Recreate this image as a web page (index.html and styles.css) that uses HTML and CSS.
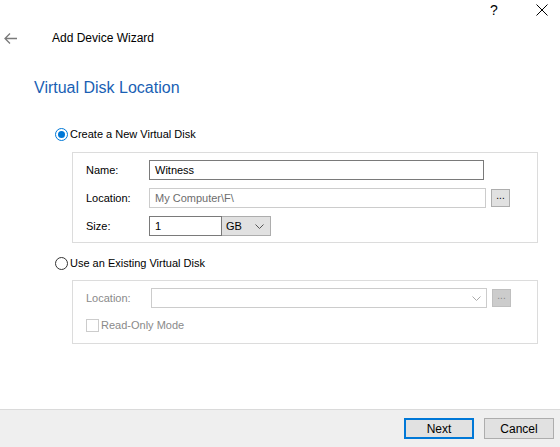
FILE: index.html
```html
<html><head>
<meta charset="utf-8">
<link rel="stylesheet" href="styles.css">
<title>Add Device Wizard</title>
</head><body>
<div class="window">
  <div class="titlebar">
    <span class="tb-btn help">?</span>
    <span class="tb-btn close">
      <svg width="12" height="12" viewBox="0 0 12 12"><path d="M0.5 0.5L11.5 11.5M11.5 0.5L0.5 11.5" stroke="#000" stroke-width="1" fill="none"/></svg>
    </span>
  </div>
  <div class="header">
    <span class="back">
      <svg width="13" height="11" viewBox="0 0 13 11"><path d="M6 0.5L1 5.5L6 10.5M1 5.5H13" stroke="#7a7a7a" stroke-width="1.3" fill="none"/></svg>
    </span>
    <span class="wizard-title">Add Device Wizard</span>
  </div>

  <div class="main">
    <div class="page-title">Virtual Disk Location</div>

    <label class="option">
      <span class="radio checked"></span>
      <span>Create a New Virtual Disk</span>
    </label>
    <div class="group">
      <div class="row">
        <span class="lbl">Name:</span>
        <div class="field name-field">Witness</div>
      </div>
      <div class="row">
        <span class="lbl">Location:</span>
        <div class="field readonly loc-field">My Computer\F\</div>
        <span class="browse">...</span>
      </div>
      <div class="row">
        <span class="lbl">Size:</span>
        <div class="field size-field">1</div>
        <div class="combo">GB
          <svg width="9" height="5" viewBox="0 0 9 5"><path d="M0.5 0.5L4.5 4.5L8.5 0.5" stroke="#555" fill="none"/></svg>
        </div>
      </div>
    </div>

    <label class="option second">
      <span class="radio"></span>
      <span>Use an Existing Virtual Disk</span>
    </label>
    <div class="group disabled">
      <div class="row">
        <span class="lbl">Location:</span>
        <div class="field dropdown">
          <svg width="9" height="5" viewBox="0 0 9 5"><path d="M0.5 0.5L4.5 4.5L8.5 0.5" stroke="#aaa" fill="none"/></svg>
        </div>
        <span class="browse">...</span>
      </div>
      <div class="row check-row">
        <span class="checkbox"></span>
        <span>Read-Only Mode</span>
      </div>
    </div>
  </div>

  <div class="footer">
    <button class="btn default">Next</button>
    <button class="btn">Cancel</button>
  </div>
</div>
</body></html>
```

FILE: styles.css
```css
body {margin: 0; padding: 0; font-family: "Liberation Sans", Arial, sans-serif; font-size: 11px; color: #000; background: #fff;}
.window {width: 560px; height: 447px; display: flex; flex-direction: column; overflow: hidden;}

.titlebar {height: 20px; display: flex; justify-content: flex-end; align-items: center;}
.tb-btn {display: flex; align-items: center; justify-content: center; height: 20px;}
.help {font-size: 14px; width: 12px; margin-right: 36px;}
.close {width: 12px; margin-right: 12px;}

.header {height: 34px; display: flex; align-items: center; margin-top: 1px;}
.back {width: 13px; margin-left: 4px; display: flex;}
.wizard-title {margin-left: 35px; font-size: 12px;}

.main {flex: 1; padding-left: 34px;}
.page-title {color: #1a5fb4; font-size: 16px; margin-top: 23px; height: 20px; line-height: 20px;}

.option {display: flex; align-items: center; margin-left: 21px; margin-top: 29px; height: 14px; gap: 2px;}
.option.second {margin-top: 13px;}
.radio {width: 11px; height: 11px; border: 1px solid #333; border-radius: 50%; background: #fff; position: relative; display: inline-block;}
.radio.checked {border-color: #0078d7;}
.radio.checked::after {content: ""; position: absolute; left: 2px; top: 2px; width: 7px; height: 7px; border-radius: 50%; background: #0078d7;}

.group {margin-left: 38px; width: 451px; border: 1px solid #dcdcdc; margin-top: 11px; padding: 7px 0 6px 13px; display: flex; flex-direction: column; gap: 8px;}
.row {display: flex; align-items: center; height: 20px;}
.lbl {width: 63px;}
.field {height: 18px; border: 1px solid #7a7a7a; box-sizing: content-box; line-height: 18px; padding-left: 5px; background: #fff;}
.name-field {width: 328px;}
.loc-field {width: 330px;}
.readonly {border-color: #cccccc; color: #6d6d6d;}
.browse {width: 17px; height: 16px; margin-left: 5px; border: 1px solid #adadad; background: #e1e1e1; font-size: 10px; line-height: 12px; text-align: center; color: #000;}
.size-field {width: 66px;}
.combo {width: 38px; height: 18px; border: 1px solid #adadad; border-left: 0; background: #e1e1e1; display: flex; align-items: center; justify-content: space-between; padding: 0 6px 0 4px;}

.disabled {color: #8a8a8a; margin-top: 10px; padding-bottom: 11px;}
.disabled .dropdown {border-color: #cccccc; width: 324px; margin-left: 2px; display: flex; align-items: center; justify-content: flex-end; padding-right: 5px;}
.disabled .browse {background: #cccccc; border-color: #bfbfbf; color: #888;}
.check-row {gap: 2px; height: 14px; margin-top: 2px;}
.checkbox {width: 11px; height: 11px; border: 1px solid #cccccc; background: #fff; display: inline-block;}

.footer {height: 37px; background: #efefef; border-top: 1px solid #dadada; display: flex; justify-content: flex-end; align-items: center; padding-right: 6px; gap: 10px;}
.btn {width: 70px; height: 21px; border: 1px solid #adadad; background: #e1e1e1; font-family: "Liberation Sans", Arial, sans-serif; font-size: 12px; color: #000; padding: 0;}
.btn.default {border: 2px solid #0078d7;}
```
